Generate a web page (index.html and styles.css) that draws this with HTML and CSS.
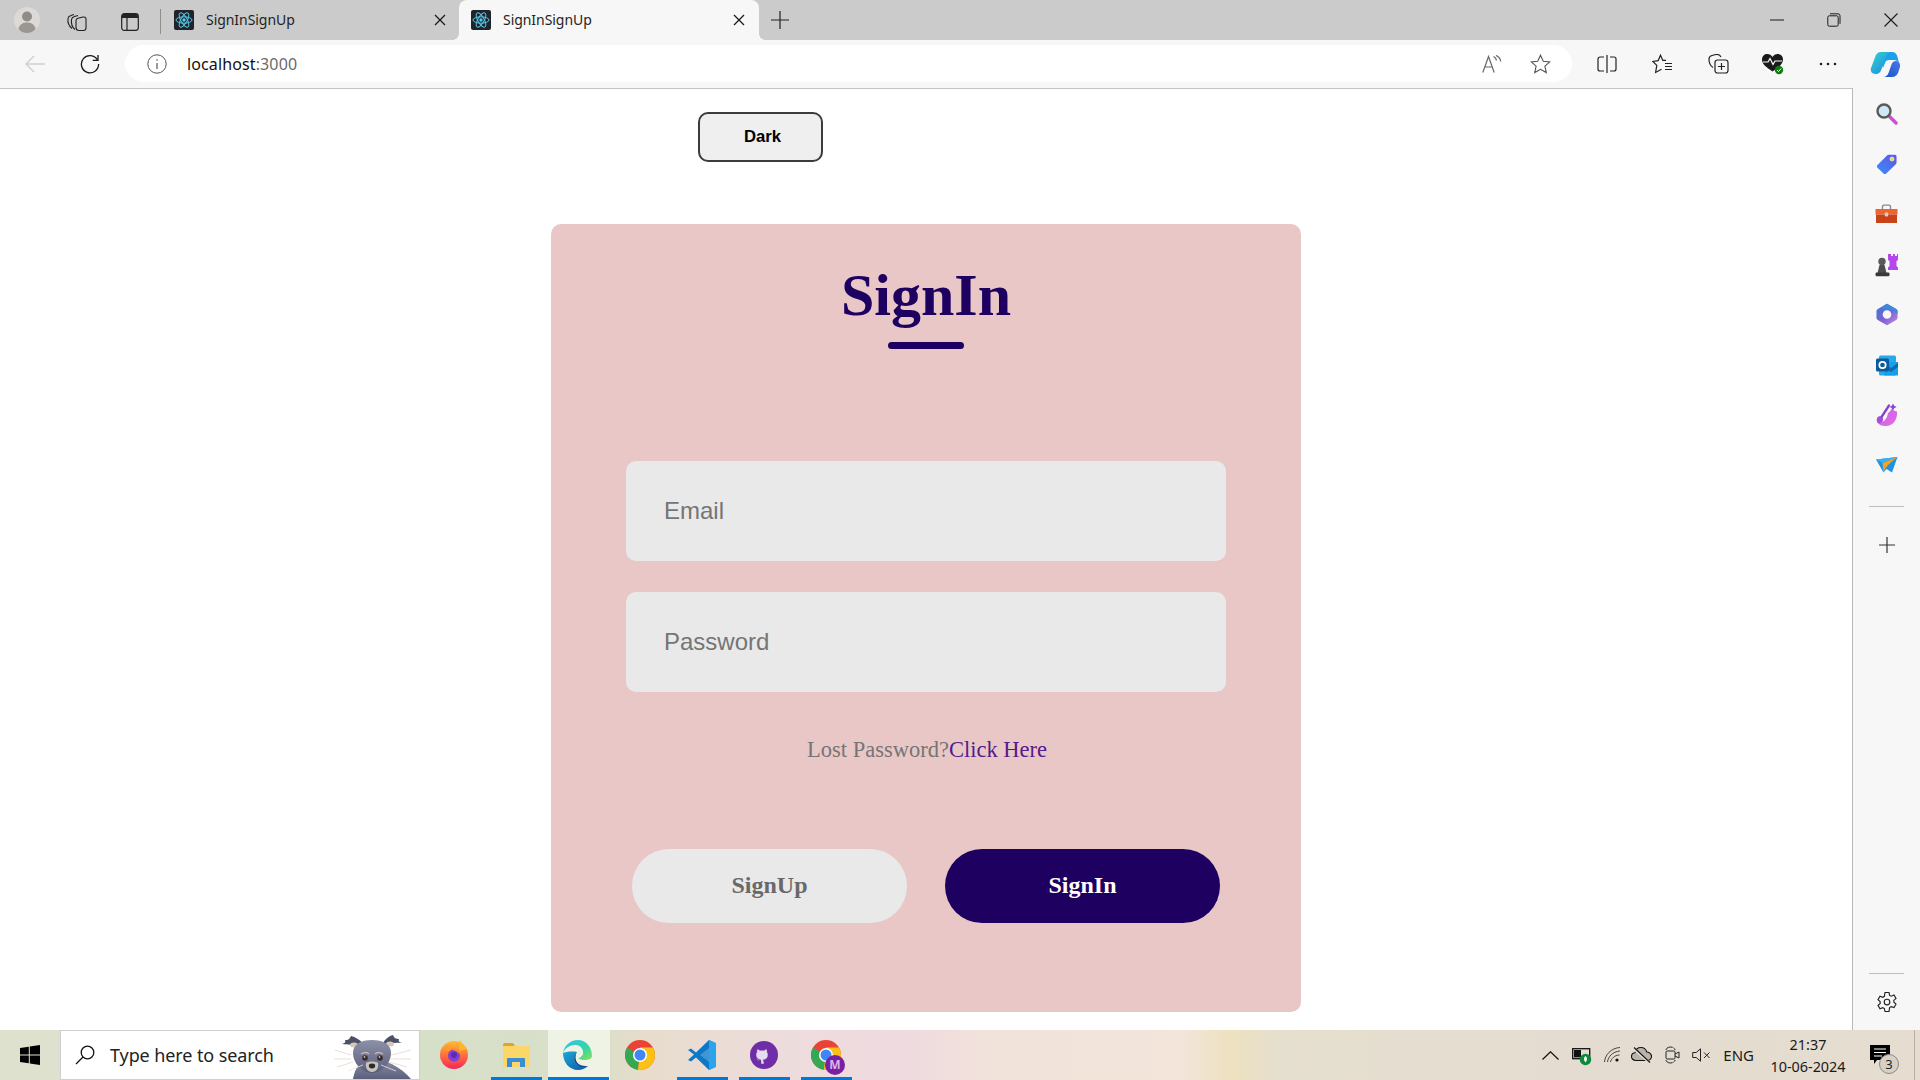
FILE: index.html
```html
<!DOCTYPE html>
<html lang="en">
<head>
<meta charset="utf-8">
<title>SignInSignUp</title>
<link rel="stylesheet" href="styles.css">
</head>
<body>
<svg class="defs" width="0" height="0" aria-hidden="true">
  <defs>
    <symbol id="react" viewBox="0 0 20 20">
      <rect width="20" height="20" rx="2" fill="#20232a"/>
      <g fill="none" stroke="#56c8e8" stroke-width="1">
        <ellipse cx="10" cy="10" rx="8" ry="3.2"/>
        <ellipse cx="10" cy="10" rx="8" ry="3.2" transform="rotate(60 10 10)"/>
        <ellipse cx="10" cy="10" rx="8" ry="3.2" transform="rotate(120 10 10)"/>
      </g>
      <circle cx="10" cy="10" r="1.7" fill="#56c8e8"/>
    </symbol>
    <symbol id="x" viewBox="0 0 12 12">
      <path d="M1 1l10 10M11 1L1 11" stroke="#1a1a1a" stroke-width="1.3" fill="none"/>
    </symbol>
    <linearGradient id="edgeA" x1="0" y1="0" x2="1" y2="1"><stop offset="0" stop-color="#1ea7d8"/><stop offset="1" stop-color="#0c59a4"/></linearGradient>
    <linearGradient id="edgeB" x1="0" y1="0" x2="1" y2="1"><stop offset="0" stop-color="#35c1f1"/><stop offset=".6" stop-color="#35d6a0"/><stop offset="1" stop-color="#8ee05a"/></linearGradient>
    <linearGradient id="coA" x1="0" y1="0" x2="1" y2="1"><stop offset="0" stop-color="#2fd8c8"/><stop offset="1" stop-color="#1f7fe8"/></linearGradient>
    <linearGradient id="coB" x1="0" y1="1" x2="1" y2="0"><stop offset="0" stop-color="#1450c8"/><stop offset="1" stop-color="#4a78e8"/></linearGradient>
    <linearGradient id="ffA" x1="0" y1="0" x2="0" y2="1"><stop offset="0" stop-color="#ffbd2e"/><stop offset=".5" stop-color="#ff7139"/><stop offset="1" stop-color="#f2285c"/></linearGradient>
    <linearGradient id="tagA" x1="0" y1="1" x2="1" y2="0"><stop offset="0" stop-color="#3f8cf5"/><stop offset="1" stop-color="#5a58e8"/></linearGradient>
    <linearGradient id="m365" x1="0" y1="0" x2="1" y2="1"><stop offset="0" stop-color="#2f7fd8"/><stop offset=".5" stop-color="#7d5fd0"/><stop offset="1" stop-color="#c58ae0"/></linearGradient>
    <linearGradient id="drop" x1="0" y1="0" x2="1" y2="1"><stop offset="0" stop-color="#c765f0"/><stop offset="1" stop-color="#e46ae0"/></linearGradient>
    <linearGradient id="bodyG" x1="0" y1="0" x2="0" y2="1"><stop offset="0" stop-color="#8c90a8"/><stop offset="1" stop-color="#5a5f7c"/></linearGradient>
  </defs>
</svg>

<header class="tabstrip">
  <div class="avatar">
    <svg width="26" height="26" viewBox="0 0 26 26"><circle cx="13" cy="13" r="13" fill="#dcdad6"/><circle cx="13" cy="9.5" r="5" fill="#8f8b86"/><path d="M4.500 22c1-5 4.500-6.500 8.500-6.500s7.500 1.500 8.500 6.500c-2 2.500-5 4-8.500 4s-6.500-1.500-8.500-4z" fill="#9a9691"/></svg>
  </div>
  <svg class="ws-icon" width="22" height="20" viewBox="0 0 22 20" fill="none" stroke="#222" stroke-width="1.100"><path d="M6 16.500C3 14 1.500 10 2 6.500 2.200 5 3.500 4 5 3.500l3-1"/><path d="M9 17.500c-2.500-2-4-6-3.500-10 .2-1.500 1.500-2.500 3-3l3.500-1"/><path d="M10 8.500c0-1.200.8-2 2-2.300l5-1.200c1.500-.3 3 .5 3 2v9c0 1.500-1 2.500-2.500 2.500H13c-1.700 0-3-1.300-3-3z"/></svg>
  <svg class="vt-icon" width="18" height="18" viewBox="0 0 18 18"><rect x=".7" y=".7" width="16.600" height="16.600" rx="2.500" fill="none" stroke="#222" stroke-width="1.200"/><path d="M1 3a2 2 0 012-2h12a2 2 0 012 2v2H1z" fill="#222"/><path d="M6 5v12" stroke="#222" stroke-width="1.200"/></svg>
  <span class="tab-sep"></span>
  <div class="tab">
    <svg class="favicon" width="20" height="20"><use href="#react"/></svg>
    <span class="tab-title">SignInSignUp</span>
    <svg class="tab-close" width="12" height="12"><use href="#x"/></svg>
  </div>
  <div class="tab tab-active">
    <svg class="favicon" width="20" height="20"><use href="#react"/></svg>
    <span class="tab-title">SignInSignUp</span>
    <svg class="tab-close" width="12" height="12"><use href="#x"/></svg>
  </div>
  <svg class="newtab" width="18" height="18" viewBox="0 0 18 18"><path d="M9 0v18M0 9h18" stroke="#222" stroke-width="1.200"/></svg>
  <div class="winctl">
    <svg width="14" height="14" viewBox="0 0 14 14"><path d="M0 7h14" stroke="#1a1a1a" stroke-width="1"/></svg>
    <svg width="14" height="14" viewBox="0 0 14 14" fill="none" stroke="#1a1a1a" stroke-width="1"><rect x=".8" y="2.800" width="10.400" height="10.400" rx="1.500"/><path d="M3 .8h8a2 2 0 012 2v8"/></svg>
    <svg width="14" height="14" viewBox="0 0 14 14"><path d="M.5.500l13 13M13.500.5l-13 13" stroke="#1a1a1a" stroke-width="1.100"/></svg>
  </div>
</header>

<nav class="toolbar">
  <svg class="tb-back" width="20" height="18" viewBox="0 0 20 18" fill="none" stroke="#cfcfcf" stroke-width="1.300"><path d="M20 9H1M9 1L1 9l8 8"/></svg>
  <svg class="tb-reload" width="20" height="20" viewBox="0 0 20 20" fill="none" stroke="#1a1a1a" stroke-width="1.300"><path d="M17.500 6A8.600 8.600 0 1018.600 10"/><path d="M18 1v5.300h-5.300"/></svg>
  <div class="omnibox">
    <svg class="omni-info" width="20" height="20" viewBox="0 0 20 20" fill="none" stroke="#555"><circle cx="10" cy="10" r="9.200" stroke-width="1"/><path d="M10 9v6" stroke-width="1.200"/><circle cx="10" cy="6" r=".8" fill="#555" stroke="none"/></svg>
    <span class="url"><span class="url-host">localhost</span>:3000</span>
    <svg class="omni-read" width="20" height="18" viewBox="0 0 20 18" fill="none" stroke="#666" stroke-width="1.200"><path d="M.8 17.500L6.500 1.500l5.700 16M2.800 12h7.400"/><path d="M11.500 1.500c1.800.8 2.800 2.300 3 4M14 .5c2.500 1 4.300 3 4.800 6"/></svg>
    <svg class="omni-star" width="21" height="20" viewBox="0 0 21 20" fill="none" stroke="#555" stroke-width="1.100"><path d="M10.500 1.200l2.800 6 6.500.7-4.900 4.300 1.400 6.400-5.800-3.300-5.800 3.300 1.400-6.400L1.200 7.900l6.500-.7z"/></svg>
  </div>
  <svg class="tb-split" width="20" height="20" viewBox="0 0 20 20" fill="none" stroke="#222" stroke-width="1.200"><path d="M7 3H3a2 2 0 00-2 2v10a2 2 0 002 2h4M13 3h4a2 2 0 012 2v10a2 2 0 01-2 2h-4M10 1v18"/></svg>
  <svg class="tb-fav" width="21" height="20" viewBox="0 0 21 20" fill="none" stroke="#222" stroke-width="1.200"><path d="M14 6.300h-3.200L8.500 1.200 6.200 6.600l-5.400.8 4 4-1.200 7.100 5.900-3.200"/><path d="M13 9.500h7M13 12.500h7M13 15.500h7"/></svg>
  <svg class="tb-coll" width="21" height="20" viewBox="0 0 21 20" fill="none" stroke="#222" stroke-width="1.200"><path d="M5 13.500C2.500 12 1 8.500 1 5c0-1.800 1.200-3 3-3.500l4-1c2-.3 4 .5 5 2.500"/><rect x="7" y="6" width="13" height="13" rx="2.500"/><path d="M13.500 9v7M10 12.500h7"/></svg>
  <svg class="tb-heart" width="22" height="22" viewBox="0 0 22 22"><path d="M10.500 18.500C5 14.500 0 11.500 0 6.500 0 3 2.500 1 5.300 1c2.300 0 4 1.200 5.200 3 1.200-1.800 2.900-3 5.200-3C18.500 1 21 3 21 6.500c0 5-5 8-10.500 12z" fill="#1a1a1a"/><path d="M1 9h5l2-3.500 3 6 2-3.500h7" fill="none" stroke="#fff" stroke-width="1.200"/><circle cx="17" cy="17" r="4.200" fill="#107c10"/><path d="M15 17l1.500 1.500 2.700-2.900" fill="none" stroke="#fff" stroke-width="1"/></svg>
  <svg class="tb-more" width="18" height="4" viewBox="0 0 18 4"><circle cx="2" cy="2" r="1.300" fill="#222"/><circle cx="9" cy="2" r="1.300" fill="#222"/><circle cx="16" cy="2" r="1.300" fill="#222"/></svg>
  <svg class="tb-copilot" width="31" height="27" viewBox="0 0 31 27"><path d="M14 1h8c3 0 5 2 5.500 5l1.500 6c-1-2-3-3-5-3h-5c-2 0-3.500 1.300-4 3l-2 5-3-9c-.5-3 1-7 4-7z" fill="#1aa0ec"/><path d="M11 1c-3 0-4.800 1.800-5.500 4L1 17c-1 3 1 6 4.500 6s5-2 5.700-4L15 8c.8-3 3-7 6-7z" fill="url(#coA)"/><path d="M9 26h13c3 0 5-1.800 6-4l2-6c.7-3-1-6-4-6-2 0-3.500 1-4.300 3l-3.200 9c-.6 2-2.500 4-5.500 4z" fill="url(#coB)"/></svg>
</nav>

<div class="workspace">
  <main class="page">
    <button class="theme-btn" type="button">Dark</button>
    <form class="card">
      <h1 class="card-title">SignIn</h1>
      <div class="title-bar"></div>
      <input class="field field-first" type="text" placeholder="Email">
      <input class="field" type="password" placeholder="Password">
      <p class="lost">Lost Password?<a class="lost-link" href="#">Click Here</a></p>
      <div class="actions">
        <button class="pill pill-off" type="button">SignUp</button>
        <button class="pill pill-on" type="button">SignIn</button>
      </div>
    </form>
  </main>
  <aside class="sidebar">
    <span class="side-slot"><svg width="22" height="22" viewBox="0 0 22 22"><path d="M13 13l7 7" stroke="#d04fd8" stroke-width="3.500" stroke-linecap="round"/><circle cx="8" cy="8" r="6.500" fill="#cfe8f5" stroke="#5a5a5a" stroke-width="2.400"/></svg></span>
    <span class="side-slot"><svg width="22" height="22" viewBox="0 0 22 22"><path d="M1.500 12L11 2.500c.5-.5 1-.7 1.700-.7H19a1.500 1.500 0 011.500 1.500v6.300c0 .7-.2 1.200-.7 1.700L10.300 20.500c-.8.800-2 .8-2.800 0L1.500 14.800c-.8-.8-.8-2 0-2.800z" fill="url(#tagA)"/><circle cx="16" cy="6" r="2" fill="#f8d34a" stroke="#fff" stroke-width=".6"/></svg></span>
    <span class="side-slot"><svg width="23" height="20" viewBox="0 0 23 20"><path d="M7.500 5V2.500c0-.8.600-1.400 1.400-1.400h5.200c.8 0 1.400.6 1.400 1.400V5" fill="none" stroke="#8a8a8a" stroke-width="1.400"/><rect x=".5" y="5" width="22" height="5.500" fill="#f0642c"/><rect x="1" y="10.500" width="21" height="8.500" fill="#c8431a"/><rect x="9.800" y="8.500" width="3.400" height="4" rx="1" fill="#d8d0c8"/></svg></span>
    <span class="side-slot"><svg width="24" height="24" viewBox="0 0 24 24"><path d="M14 1h2v2h2V1h2v2h2V1h1v6l-1.500 1v5l1.500 1.500V17H13v-2.500L14.500 13V8L13 7V1z" fill="#b548ea"/><circle cx="7" cy="8.500" r="3.700" fill="#5a5a5a"/><path d="M4.500 12h5l2 8h-9z" fill="#4d4d4d"/><rect x=".5" y="19.500" width="14" height="3.800" rx="1.200" fill="#3a3a3a"/></svg></span>
    <span class="side-slot"><svg width="22" height="23" viewBox="0 0 22 23"><path d="M11 .8l9.200 5.300c.8.500 1.300 1.300 1.300 2.200v6.400c0 .9-.5 1.700-1.300 2.200L11 22.200 1.800 16.900C1 16.400.5 15.600.5 14.700V8.300c0-.9.5-1.700 1.300-2.200z" fill="url(#m365)"/><path d="M11 .8l9.200 5.300c.8.500 1.300 1.300 1.300 2.200V11l-6-3.500c-2-1-4-1.500-6-.5L7 8V3z" fill="#3f86dc"/><circle cx="11" cy="11.500" r="4.300" fill="#f7f7f7"/></svg></span>
    <span class="side-slot"><svg width="22" height="21" viewBox="0 0 22 21"><rect x="3" y=".5" width="17" height="20" rx="1.500" fill="#28a8ea"/><path d="M8 7h14v12.500c0 .6-.5 1-1 1H9c-.6 0-1-.4-1-1z" fill="#14a0e8"/><path d="M8 8l7 5 7-5v4l-7 5-7-5z" fill="#0a6ab4"/><rect x="0" y="3.500" width="13" height="13" rx="1.500" fill="#0a5a9e"/><circle cx="6.500" cy="10" r="3.200" fill="none" stroke="#fff" stroke-width="1.700"/></svg></span>
    <span class="side-slot"><svg width="23" height="24" viewBox="0 0 23 24"><path d="M13 10c2-1 3-3 3.500-4.500 2 2 4 3 5.500 3 .7 7-3 14-10.500 14.500-4 .2-7.500-1-9-3.500 4 .5 9-1 10.500-9.500z" fill="url(#drop)"/><path d="M2 19C1 15 3 12.500 6 13.500c2 .7 2.700 3 1.500 5C6.300 20.500 3 21 2 19z" fill="#a64fd8"/><path d="M6.500 14L14 2.500" stroke="#8a3fd0" stroke-width="2.300" stroke-linecap="round"/><path d="M18 .5l1.200 2.300 2.300 1.200-2.300 1.200L18 7.500l-1.200-2.500-2.300-1 2.300-1.200z" fill="#8a44e0"/></svg></span>
    <span class="side-slot"><svg width="22" height="16" viewBox="0 0 22 16"><path d="M0 2.500L21.500 0 16 15.500l-5.500-3.500-3 3.500z" fill="#1f92e8"/><path d="M0 2.500L21.500 0 6.500 6z" fill="#35b0f5"/><path d="M21.500 0L6.500 6l1 9.500c.8-3.500 4-8 14-15.500z" fill="#f3a31c"/></svg></span>
    <span class="side-rule side-rule-a"></span>
    <svg class="side-plus" width="16" height="16" viewBox="0 0 16 16"><path d="M8 0v16M0 8h16" stroke="#333" stroke-width="1.200"/></svg>
    <span class="side-rule side-rule-b"></span>
    <svg class="side-gear" width="22" height="22" viewBox="0 0 22 22" fill="none" stroke="#222" stroke-width="1.150"><path d="M9 1.500h4l.6 2.900 1.700.8 2.700-1.200 2 3.400-2.200 2 .1 1.800 2.100 2-2 3.400-2.800-1-1.600 1L13 20.500H9l-.6-2.900-1.700-.9-2.700 1.100-2-3.400 2.200-2-.1-1.800-2.100-2 2-3.400 2.800 1.100 1.600-1z"/><circle cx="11" cy="11" r="2.800"/></svg>
  </aside>
</div>

<footer class="taskbar">
  <div class="start">
    <svg width="20" height="20" viewBox="0 0 20 20" fill="#000"><path d="M0 2.900l8.800-1.200v7.800H0zM9.800 1.500L20 0v9.500H9.800zM0 10.500h8.800v7.800L0 17.100zM9.800 10.500H20V20L9.800 18.500z"/></svg>
  </div>
  <div class="search">
    <svg class="search-glass" width="20" height="20" viewBox="0 0 20 20" fill="none" stroke="#111" stroke-width="1.300"><circle cx="12.500" cy="7.500" r="6.300"/><path d="M8 12L1 19"/></svg>
    <span class="search-text">Type here to search</span>
    <svg class="search-mascot" width="84" height="50" viewBox="0 0 84 50">
      <g stroke="#e8d4cc" stroke-width=".8" fill="none"><path d="M18 26L2 21M18 30L1 30M20 33L4 38M58 26l20-5M58 30l20 0M56 33l18 5"/></g>
      <path d="M20 50C22 38 28 30 40 30s28 8 38 20z" fill="url(#bodyG)"/>
      <path d="M24 18c-4-3-9-2-15-3 3-1 4-2 3-4 3 0 4 0 6-4 4 1 10 4 12 8z" fill="#4a5068"/>
      <path d="M53 17c4-3 9-4 16-3-3-1-4-2-3-4-3 0-5-1-6-4-4 1-8 4-10 8z" fill="#4a5068"/>
      <ellipse cx="21" cy="16" rx="4" ry="2.500" fill="#d8c8b8"/><ellipse cx="57" cy="15" rx="4" ry="2.500" fill="#d8c8b8"/>
      <path d="M20 24c0-9 8-13 19-13s19 4 19 13c0 10-9 20-19 20S20 34 20 24z" fill="url(#bodyG)"/>
      <path d="M28 25c3-2 6-2 8 0M42 25c2-2 5-2 8 0" stroke="#c8b8a8" stroke-width="1.500" fill="none"/>
      <circle cx="32" cy="29" r="2.800" fill="#3a2a28"/><circle cx="47" cy="29" r="2.800" fill="#3a2a28"/>
      <circle cx="31.500" cy="28" r=".8" fill="#fff"/><circle cx="46.500" cy="28" r=".8" fill="#fff"/>
      <path d="M33 34c2-2 10-2 12 0 1 5-2 9-6 9s-7-4-6-9z" fill="#c8c4bc"/>
      <ellipse cx="39" cy="37" rx="3.200" ry="2.400" fill="#2f2a2a"/>
      <g stroke="#f2e4dc" stroke-width=".8" fill="none"><path d="M30 36L15 42M48 36l15 6"/></g>
    </svg>
  </div>
  <div class="task-apps">
    <div class="app">
      <svg width="28" height="29" viewBox="0 0 28 29"><circle cx="14" cy="15" r="14" fill="url(#ffA)"/><path d="M20 0c1 3 5 5 6.500 9l-7 2c-1-4-1-8 .5-11z" fill="#ffb52e"/><path d="M3 7c3-2 6-2 9 0l-4 5z" fill="#ff9a30"/><circle cx="14" cy="15.500" r="6" fill="#7f3fd8"/><circle cx="14" cy="15" r="3" fill="#5a2ab8"/><path d="M9 9c5-2 11 0 12 6l-5-4z" fill="#ff8a30"/></svg>
    </div>
    <div class="app app-open">
      <svg width="28" height="24" viewBox="0 0 28 24"><path d="M1 2a2 2 0 012-2h8l2 3H1z" fill="#e0a526"/><rect x="1" y="3" width="27" height="21" rx="1.500" fill="#fbd668"/><path d="M5 24v-8a1 1 0 011-1h16a1 1 0 011 1v8h-5v-5h-8v5z" fill="#3b8ed6"/></svg>
    </div>
    <div class="app app-open app-active">
      <svg width="30" height="30" viewBox="0 0 30 30"><path d="M29 16C29 7 23 0 15 0 7 0 1 6 0 13c2-5 7-8 12-8 6 0 9 5 8 9-.5 2-3 4-5 4 3 3 14 3 14-2z" fill="url(#edgeB)"/><path d="M0 13c0 9 6 17 15 17 4 0 8-2 10-4-4 1-10 0-12-4-2-3-2-7 1-10-5-1-12 0-14 1z" fill="url(#edgeA)"/><path d="M14 12c-4 4-3 9 0 12 3 3 8 3.500 11 2-3 0-8 0-10.500-3C12 20 12 15 14 12z" fill="#0a3f86"/></svg>
    </div>
    <div class="app">
      <svg width="30" height="30" viewBox="0 0 30 30"><circle cx="15" cy="15" r="15" fill="#ea4335"/><path d="M15 15L2 7.500A15 15 0 000 15a15 15 0 0012.800 14.800z" fill="#34a853"/><path d="M15 15l-2.200 14.800A15 15 0 0030 15a15 15 0 00-2-7.500H15z" fill="#fbc116"/><circle cx="15" cy="15" r="7" fill="#fff"/><circle cx="15" cy="15" r="5.500" fill="#4285f4"/></svg>
    </div>
    <div class="app app-open">
      <svg width="30" height="30" viewBox="0 0 30 30"><path d="M22 0l7 3.300v23.400L22 30 9 17.500l-5 4L1 20l6-5.500L1 10l3-1.500 5 3.900z" fill="#0b78c8"/><path d="M22 0l7 3.300v23.400L22 30z" fill="#2ba4ec"/><path d="M22 8v14l-9-7z" fill="#e4edf0" opacity=".25"/></svg>
    </div>
    <div class="app app-open">
      <svg width="28" height="28" viewBox="0 0 28 28"><circle cx="14" cy="14" r="14" fill="#6f2da8"/><path d="M11 23v-3.500c-3 .6-4-1-4.500-2 1 .3 1.800 1 2.500 1.700.5.500 1.500.3 2-.2-3-.5-5-2-5-5.300 0-1 .5-2 1-2.700-.2-.8-.2-1.800.2-2.800 1 0 2 .6 2.800 1.200a9 9 0 014 0c.8-.6 1.800-1.200 2.800-1.200.4 1 .4 2 .2 2.800.5.700 1 1.700 1 2.700 0 3.300-2 4.800-5 5.300.6.500.9 1.200.9 2V23z" fill="#e6dcf0" stroke="#6f2da8" stroke-width=".4"/></svg>
    </div>
    <div class="app app-open">
      <span class="chrome-m">
        <svg width="30" height="30" viewBox="0 0 30 30"><circle cx="15" cy="15" r="15" fill="#ea4335"/><path d="M15 15L2 7.500A15 15 0 000 15a15 15 0 0012.800 14.800z" fill="#34a853"/><path d="M15 15l-2.200 14.800A15 15 0 0030 15a15 15 0 00-2-7.500H15z" fill="#fbc116"/><circle cx="15" cy="15" r="7" fill="#fff"/><circle cx="15" cy="15" r="5.500" fill="#4285f4"/></svg>
        <span class="m-badge">M</span>
      </span>
    </div>
  </div>
  <div class="tray">
    <svg class="tray-chev" width="17" height="9" viewBox="0 0 17 9" fill="none" stroke="#111" stroke-width="1.200"><path d="M.5 8.500L8.500.8l8 7.700"/></svg>
    <svg class="tray-batt" width="20" height="21" viewBox="0 0 20 21"><rect x=".7" y="3.700" width="17" height="10" fill="none" stroke="#111" stroke-width="1.300"/><rect x="2" y="5" width="7" height="7.400" fill="#111"/><circle cx="13.500" cy="14.500" r="5.700" fill="#0b8a3c"/><path d="M13.500 11c-2 1.500-2 4.500 0 6.500 2-2 2-5 0-6.500z" fill="#fff"/></svg>
    <svg class="tray-wifi" width="17" height="16" viewBox="0 0 17 16" fill="none" stroke="#333" stroke-width=".9"><path d="M.5 15C1 8 7 1 16 .5M3.500 15C4 10 8.500 4.500 16 4M6.500 15c.5-3 4-7 9-7"/><circle cx="13" cy="13" r="1.600" fill="#111" stroke="none"/></svg>
    <svg class="tray-cloud" width="21" height="18" viewBox="0 0 21 18"><path d="M5 14.500C2 14.500.5 12.500.5 10.500S2 7 4 6.800C4.500 3.500 7 1.500 10 1.500c3 0 5 2 5.800 4.500 2.500 0 4.700 2 4.700 4.300 0 2.300-2 4.200-4.500 4.200z" fill="#b8b4ae" stroke="#111" stroke-width="1.100"/><path d="M3 3l16 14" stroke="#e6dcd0" stroke-width="2.600"/><path d="M3 1.500l16 15" stroke="#111" stroke-width="1.100"/></svg>
    <svg class="tray-meet" width="15" height="20" viewBox="0 0 15 20" fill="none" stroke="#222" stroke-width="1"><path d="M.8 5C2 1 9 1 10.200 5M.8 15C2 19 9 19 10.200 15" stroke-dasharray="8 1"/><rect x="1" y="6" width="9" height="8" rx="1.200"/><path d="M10 9l4-2v6l-4-2"/></svg>
    <svg class="tray-mute" width="19" height="14" viewBox="0 0 19 14" fill="none" stroke="#222" stroke-width="1"><path d="M.7 4.500h3.500L8.500.8v12.400L4.200 9.500H.7z"/><path d="M12 4.500l5.500 5.500M17.500 4.500L12 10"/></svg>
    <span class="tray-lang">ENG</span>
    <div class="clock"><span>21:37</span><span>10-06-2024</span></div>
    <div class="notify">
      <svg width="20" height="20" viewBox="0 0 20 20"><path d="M0 0h20v15H7l-3 4v-4H0z" fill="#000"/><path d="M4 4h12M4 7.500h12M4 11h8" stroke="#fff" stroke-width="1"/></svg>
      <span class="notify-badge">3</span>
    </div>
    <span class="show-desktop"></span>
  </div>
</footer>
</body>
</html>
```

FILE: styles.css
```css
* { box-sizing: border-box; }

html, body {
  margin: 0;
  height: 100%;
}

body {
  width: 1920px;
  height: 1080px;
  display: flex;
  flex-direction: column;
  overflow: hidden;
  background: #fff;
  font-family: "Noto Sans", "Open Sans", sans-serif;
}

.defs { position: absolute; }

svg { display: block; flex: none; }

/* Browser tab strip */
.tabstrip {
  position: relative;
  z-index: 2;
  height: 40px;
  flex: none;
  display: flex;
  align-items: center;
  background: #cbcbcb;
}

.avatar { margin-left: 14px; }
.ws-icon { margin-left: 26px; margin-top: 3px; }
.vt-icon { margin-left: 33px; margin-top: 4px; }

.tab-sep {
  width: 1px;
  height: 25px;
  margin-left: 21px;
  margin-top: 3px;
  background: #8f8f8f;
}

.tab {
  width: 298px;
  height: 40px;
  display: flex;
  align-items: center;
  padding: 0 13px 0 13px;
  color: #1f1f1f;
}

.tab-active {
  position: relative;
  width: 300px;
  height: 44px;
  margin-top: 4px;
  padding: 0 14px 4px 12px;
  background: #f7f7f7;
  border-radius: 8px 8px 0 0;
}

.tab-active::before,
.tab-active::after {
  content: "";
  position: absolute;
  bottom: 4px;
  width: 6px;
  height: 6px;
}

.tab-active::before {
  left: -6px;
  background: radial-gradient(circle at 0 0, transparent 5.500px, #f7f7f7 6px);
}

.tab-active::after {
  right: -6px;
  background: radial-gradient(circle at 100% 0, transparent 5.500px, #f7f7f7 6px);
}

.tab-title {
  flex: 1;
  margin-left: 12px;
  margin-top: -2px;
  font-size: 14px;
  letter-spacing: -0.05px;
}

.newtab { margin-left: 12px; }

.winctl {
  margin-left: auto;
  margin-right: 22px;
  display: flex;
  gap: 43px;
  align-items: center;
}

/* Toolbar */
.toolbar {
  height: 48px;
  flex: none;
  display: flex;
  align-items: center;
  background: #f7f7f7;
}

.tb-back { margin-left: 25px; }
.tb-reload { margin-left: 35px; }

.omnibox {
  width: 1447px;
  height: 37px;
  margin-left: 25px;
  margin-top: -1px;
  display: flex;
  align-items: center;
  padding: 0 21px 0 22px;
  background: #fff;
  border-radius: 19px;
}

.url {
  margin-left: 20px;
  font-size: 16px;
  letter-spacing: 0.12px;
  color: #6b6b6b;
}

.url-host { color: #111; }

.omni-read { margin-left: auto; }
.omni-star { margin-left: 28px; }

.tb-split { margin-left: 25px; }
.tb-fav { margin-left: 35px; }
.tb-coll { margin-left: 35px; }
.tb-heart { margin-left: 33px; }
.tb-more { margin-left: 35px; }
.tb-copilot { margin-left: 33px; }

/* Main area */
.workspace {
  height: 942px;
  flex: none;
  display: flex;
}

.page {
  width: 1853px;
  flex: none;
  border-top: 1px solid #c4c4c4;
  border-right: 1px solid #b8b8b8;
  background: #fff;
  display: flex;
  flex-direction: column;
  align-items: flex-start;
}

.theme-btn {
  width: 125px;
  height: 50px;
  margin: 23px 0 0 698px;
  padding: 0 0 0 4px;
  border: 2px solid #3c3c3c;
  border-radius: 10px;
  background: #efefef;
  color: #000;
  font: bold 16.7px "Liberation Sans", Arial, sans-serif;
}

.card {
  width: 750px;
  height: 788px;
  margin: 62px 0 0 551px;
  padding-top: 41px;
  display: flex;
  flex-direction: column;
  align-items: center;
  background: #e9c7c7;
  border-radius: 10px;
  font-family: "Liberation Serif", "Times New Roman", serif;
}

.card-title {
  margin: 0;
  font-size: 60px;
  line-height: 60px;
  font-weight: bold;
  color: #1e0060;
}

.title-bar {
  width: 76px;
  height: 7px;
  margin-top: 17px;
  border-radius: 4px;
  background: #1e0060;
}

.field {
  width: 600px;
  height: 100px;
  flex: none;
  margin-top: 31px;
  padding: 0 0 0 38px;
  border: 0;
  border-radius: 10px;
  outline: 0;
  background: #e9e9e9;
  font: 24px "Liberation Sans", Arial, sans-serif;
  color: #000;
}

.field::placeholder { color: #757575; opacity: 1; }

.field-first { margin-top: 112px; }

.lost {
  margin: 45px 0 0;
  padding-left: 2px;
  font-size: 22.5px;
  line-height: 26px;
  color: #757575;
}

.lost-link { color: #551a8b; text-decoration: none; }

.actions {
  margin-top: 86px;
  display: flex;
  gap: 38px;
}

.pill {
  width: 275px;
  height: 74px;
  padding: 0 0 2px;
  border: 0;
  border-radius: 37px;
  font: bold 24px "Liberation Serif", "Times New Roman", serif;
}

.pill-off { background: #e9e9e9; color: #696969; }
.pill-on { background: #1e0060; color: #fff; }

/* Sidebar */
.sidebar {
  flex: 1;
  display: flex;
  flex-direction: column;
  align-items: center;
  padding-top: 1px;
  background: #f7f7f7;
}

.side-slot {
  height: 50.2px;
  flex: none;
  display: flex;
  align-items: center;
  justify-content: center;
}

.side-rule {
  width: 35px;
  height: 1px;
  flex: none;
  background: #bdbdbd;
}

.side-rule-a { margin-top: 15px; }
.side-plus { margin-top: 30px; }
.side-rule-b { margin-top: auto; }
.side-gear { margin-top: 17px; margin-bottom: 17px; }

/* Taskbar */
.taskbar {
  height: 50px;
  flex: none;
  display: flex;
  align-items: stretch;
  background: linear-gradient(90deg, #dfe1cf 0, #d6e0c8 430px, #dadfc8 600px, #e8dccd 650px, #eedcde 800px, #eedadf 900px, #f2e3da 1000px, #f3e5da 1180px, #ede1bf 1232px, #e5dfcf 1280px, #e4dcd0 1550px, #e6dcd0 1920px);
}

.start {
  width: 60px;
  display: flex;
  align-items: center;
  justify-content: center;
}

.search {
  width: 360px;
  display: flex;
  align-items: center;
  padding-left: 14px;
  background: #fff;
  border: 1px solid #cfcfcf;
  overflow: hidden;
}

.search-text {
  margin-left: 15px;
  font-size: 18px;
  letter-spacing: -0.1px;
  color: #222;
}

.search-mascot {
  margin-left: auto;
  margin-right: 2px;
  align-self: flex-end;
}

.task-apps {
  display: flex;
  margin-left: 4px;
}

.app {
  width: 62px;
  display: flex;
  align-items: center;
  justify-content: center;
  padding: 0 2px 1px 0;
  position: relative;
}

.app-active { background: #eff3e6; }

.app-open::after {
  content: "";
  position: absolute;
  left: 5px;
  right: 6px;
  bottom: 0;
  height: 3px;
  background: #0078d4;
}

.app-active::after { left: 0; right: 1px; }

.chrome-m { position: relative; display: block; }

.m-badge {
  position: absolute;
  right: -4px;
  bottom: -5px;
  width: 20px;
  height: 20px;
  border-radius: 50%;
  background: #7a1fa2;
  color: #d8b4e6;
  font-size: 12px;
  font-weight: 700;
  line-height: 20px;
  text-align: center;
}

.tray {
  flex: 1;
  display: flex;
  align-items: center;
  color: #1a1a1a;
}

.tray-chev { margin-left: auto; }
.tray-batt { margin-left: 13px; }
.tray-wifi { margin-left: 12px; }
.tray-cloud { margin-left: 10px; }
.tray-meet { margin-left: 13px; }
.tray-mute { margin-left: 12px; }

.tray-lang {
  margin-left: 12px;
  font-size: 15px;
}

.clock {
  width: 88px;
  margin-left: 10px;
  display: flex;
  flex-direction: column;
  align-items: center;
  gap: 3px;
  font-size: 14.4px;
  line-height: 19px;
}

.notify {
  position: relative;
  margin-left: 18px;
  margin-right: 24px;
}

.notify-badge {
  position: absolute;
  left: 9px;
  top: 9px;
  width: 20px;
  height: 20px;
  border-radius: 50%;
  background: #d8d0c4;
  border: 1px solid #8a8a8a;
  font-size: 13px;
  line-height: 18px;
  text-align: center;
  color: #222;
}

.show-desktop {
  width: 1px;
  height: 50px;
  background: #b8b0a6;
  margin-right: 5px;
}
```
